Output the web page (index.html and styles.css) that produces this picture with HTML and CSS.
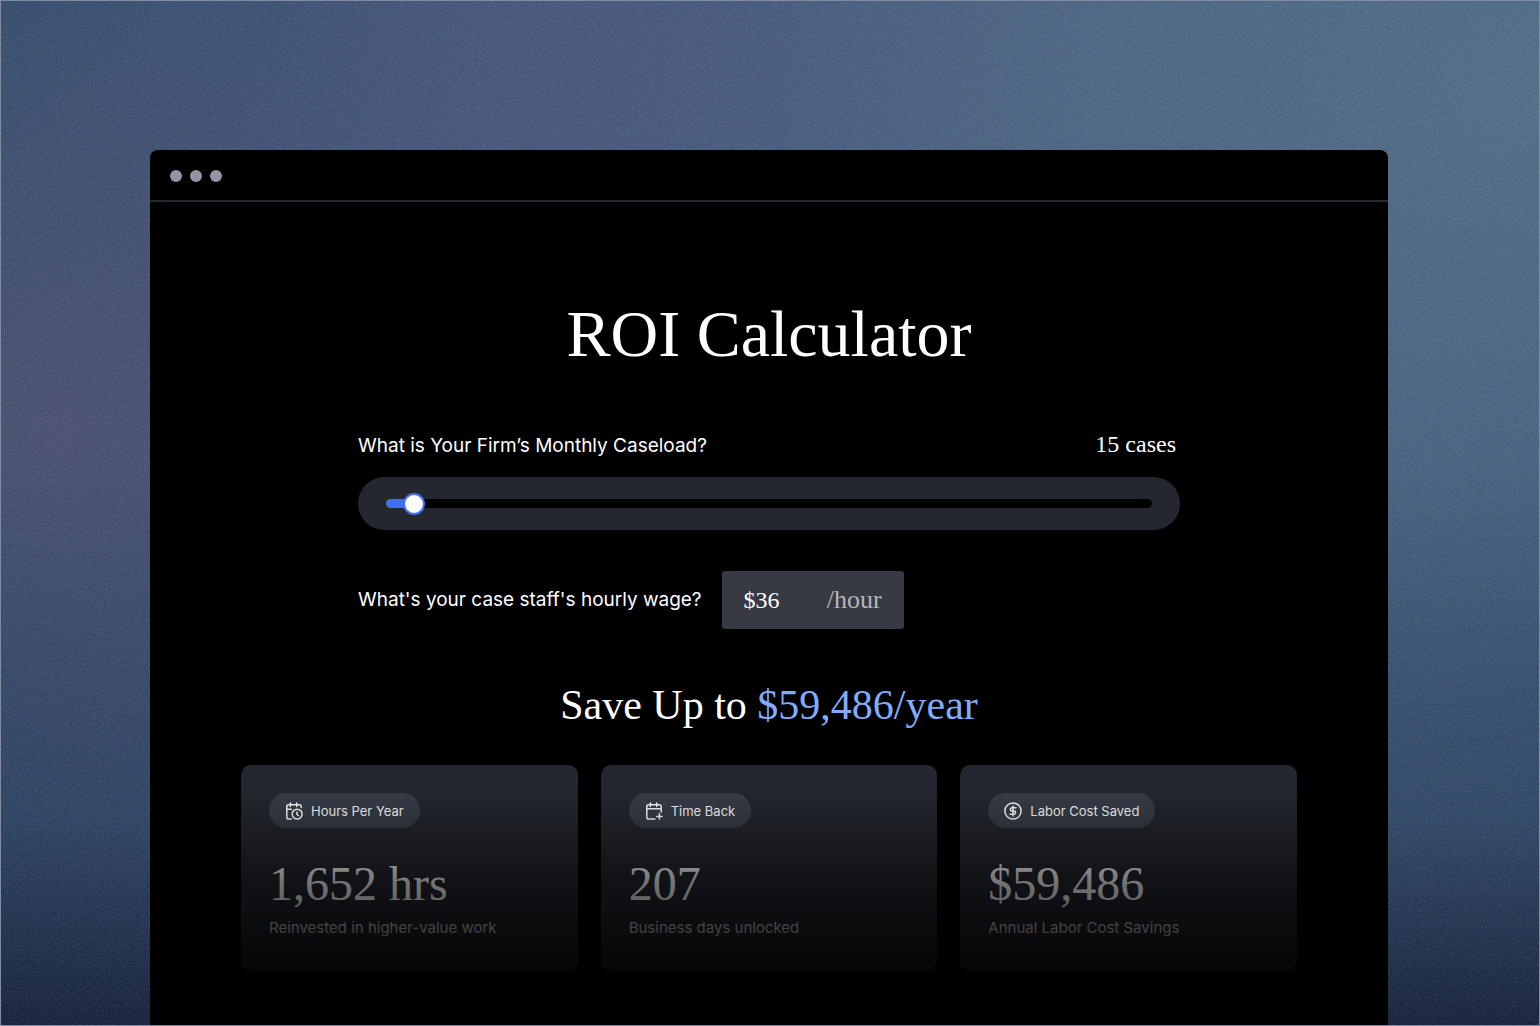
FILE: index.html
```html
<!DOCTYPE html>
<html lang="en">

<head>
  <meta charset="UTF-8">
  <meta name="viewport" content="width=device-width, initial-scale=1.0">
  <title>ROI Calculator</title>
  <link rel="stylesheet" href="styles.css">
</head>

<body>
  <svg class="grain" aria-hidden="true">
    <filter id="noise">
      <feTurbulence type="fractalNoise" baseFrequency="0.6" numOctaves="2" />
    </filter>
    <rect width="100%" height="100%" filter="url(#noise)" />
  </svg>

  <div class="window">
    <div class="titlebar">
      <span class="dot"></span>
      <span class="dot"></span>
      <span class="dot"></span>
    </div>

    <main class="content">
      <h1>ROI Calculator</h1>

      <form class="calculator">
        <div class="row">
          <label for="cases">What is Your Firm’s Monthly Caseload?</label>
          <output class="cases" for="cases">15 cases</output>
        </div>
        <div class="slider">
          <input type="range" id="cases" min="0" max="400" value="9">
        </div>
        <div class="wage">
          <label for="wage">What's your case staff's hourly wage?</label>
          <div class="wage-box">
            <input type="text" id="wage" value="$36">
            <span class="unit">/hour</span>
          </div>
        </div>
      </form>

      <h2>Save Up to <span class="amount">$59,486/year</span></h2>

      <div class="cards">
        <div class="card">
          <div class="badge">
            <svg class="icon" viewBox="0 0 20 20">
              <path d="M6 1v4M13 1v4M18 6V5a2 2 0 0 0-2-2H4a2 2 0 0 0-2 2v12a2 2 0 0 0 2 2h3M2 8h5" />
              <circle cx="13.500" cy="13.500" r="5.500" />
              <path d="M13.300 11v2.700l1.600 1.300" />
            </svg>
            Hours Per Year
          </div>
          <p class="value">1,652 hrs</p>
          <p class="caption">Reinvested in higher-value work</p>
        </div>
        <div class="card">
          <div class="badge">
            <svg class="icon" viewBox="0 0 20 20">
              <path d="M6 1v4M13 1v4M18 11V5a2 2 0 0 0-2-2H4a2 2 0 0 0-2 2v12a2 2 0 0 0 2 2h7M2 7.500h16M16 13v6M13 16h6" />
            </svg>
            Time Back
          </div>
          <p class="value">207</p>
          <p class="caption">Business days unlocked</p>
        </div>
        <div class="card">
          <div class="badge">
            <svg class="icon" viewBox="0 0 20 20">
              <circle cx="10" cy="10" r="9" />
              <path d="M13.300 6.500H8.800a1.750 1.750 0 0 0 0 3.500h2.400a1.750 1.750 0 0 1 0 3.500H6.700M10 4.500v11" />
            </svg>
            Labor Cost Saved
          </div>
          <p class="value">$59,486</p>
          <p class="caption">Annual Labor Cost Savings</p>
        </div>
      </div>
    </main>
  </div>
</body>

</html>
```
FILE: styles.css
```css
* {
  margin: 0;
  padding: 0;
  box-sizing: border-box;
}

body {
  position: relative;
  display: flex;
  min-height: 100vh;
  padding: 149px 151px 0 149px;
  border: 1px solid #7f8ca3;
  overflow: hidden;
  font-family: "Inter", sans-serif;
  color: #fff;
  background:
    radial-gradient(ellipse 50% 60% at 100% 8%, #4b6884, transparent),
    radial-gradient(ellipse 25% 45% at 4% 42%, #434a6c, transparent),
    linear-gradient(100deg, #2b4668, #3f5076 30%, #415b7d 65%, #385577);
}

/* darker towards the bottom edge */
body::before {
  content: "";
  position: absolute;
  inset: 0;
  background: linear-gradient(transparent 45%, #1a325299 80%, #0c1833);
}

.grain {
  position: absolute;
  inset: 0;
  width: 100%;
  height: 100%;
  opacity: 0.2;
}

.window {
  position: relative;
  width: 100%;
  background-color: #000;
  border-radius: 8px 8px 0 0;
}

/* fades the cards out at the bottom of the window */
.window::after {
  content: "";
  position: absolute;
  inset: auto 0 0 0;
  height: 240px;
  background: linear-gradient(#0000, #0000008c 41%, #000000b3 59%, #000000d4 77%, #000);
  pointer-events: none;
}

.titlebar {
  display: flex;
  align-items: center;
  gap: 8px;
  height: 52px;
  padding: 2px 20px 0;
  border-bottom: 2px solid #25282e;
}

.dot {
  width: 12px;
  height: 12px;
  border-radius: 50%;
  background-color: #9293a3;
}

.content {
  padding: 88px 91px 54px;
}

h1,
h2,
.cases,
.wage-box,
.value {
  font-family: "Liberation Serif", serif;
  font-weight: 400;
}

h1 {
  font-size: 66px;
  line-height: 88px;
  text-align: center;
}

.calculator {
  max-width: 822px;
  margin: 48px auto 0;
}

.row {
  display: flex;
  justify-content: space-between;
  align-items: flex-start;
  padding-right: 4px;
}

label {
  font-size: 19px;
  font-weight: 400;
  line-height: 40px;
}

.cases {
  font-size: 24px;
  line-height: 36px;
}

.slider {
  display: flex;
  align-items: center;
  height: 53px;
  margin-top: 11px;
  padding: 0 28px;
  border-radius: 27px;
  background-color: #24272f;
}

.slider input {
  appearance: none;
  width: 100%;
  height: 9px;
  border-radius: 5px;
  background: linear-gradient(90deg, #416ef5 28px, #000 28px);
}

.slider input::-webkit-slider-thumb {
  appearance: none;
  width: 22px;
  height: 22px;
  border: 2px solid #416ef5;
  border-radius: 50%;
  background-color: #fff;
}

.wage {
  display: flex;
  align-items: center;
  gap: 20px;
  margin-top: 41px;
}

.wage-box {
  display: flex;
  align-items: center;
  justify-content: space-between;
  width: 182px;
  height: 58px;
  padding: 0 22px;
  border-radius: 3px;
  background-color: #373a43;
  font-size: 24px;
}

.wage-box input {
  width: 60px;
  border: none;
  background: none;
  color: inherit;
  font: inherit;
}

.unit {
  font-size: 26px;
  color: #b5b6b9;
}

h2 {
  margin-top: 48px;
  font-size: 42px;
  line-height: 56px;
  text-align: center;
}

.amount {
  color: #82acfb;
}

.cards {
  display: grid;
  grid-template-columns: repeat(3, 1fr);
  gap: 23px;
  margin-top: 32px;
}

.card {
  padding: 28px;
  border-radius: 10px;
  background-color: #24272f;
}

.badge {
  display: flex;
  align-items: center;
  gap: 8px;
  width: fit-content;
  height: 35px;
  padding: 0 16px;
  border-radius: 18px;
  background-color: #383d48;
  font-size: 13px;
}

.icon {
  width: 18px;
  height: 18px;
  fill: none;
  stroke: currentColor;
  stroke-width: 1.7;
  stroke-linecap: round;
  stroke-linejoin: round;
}

.value {
  margin-top: 26px;
  font-size: 48px;
  line-height: 60px;
}

.caption {
  margin-top: 2px;
  padding-bottom: 3px;
  font-size: 15px;
  line-height: 24px;
  color: #dcdcdc;
}
```
